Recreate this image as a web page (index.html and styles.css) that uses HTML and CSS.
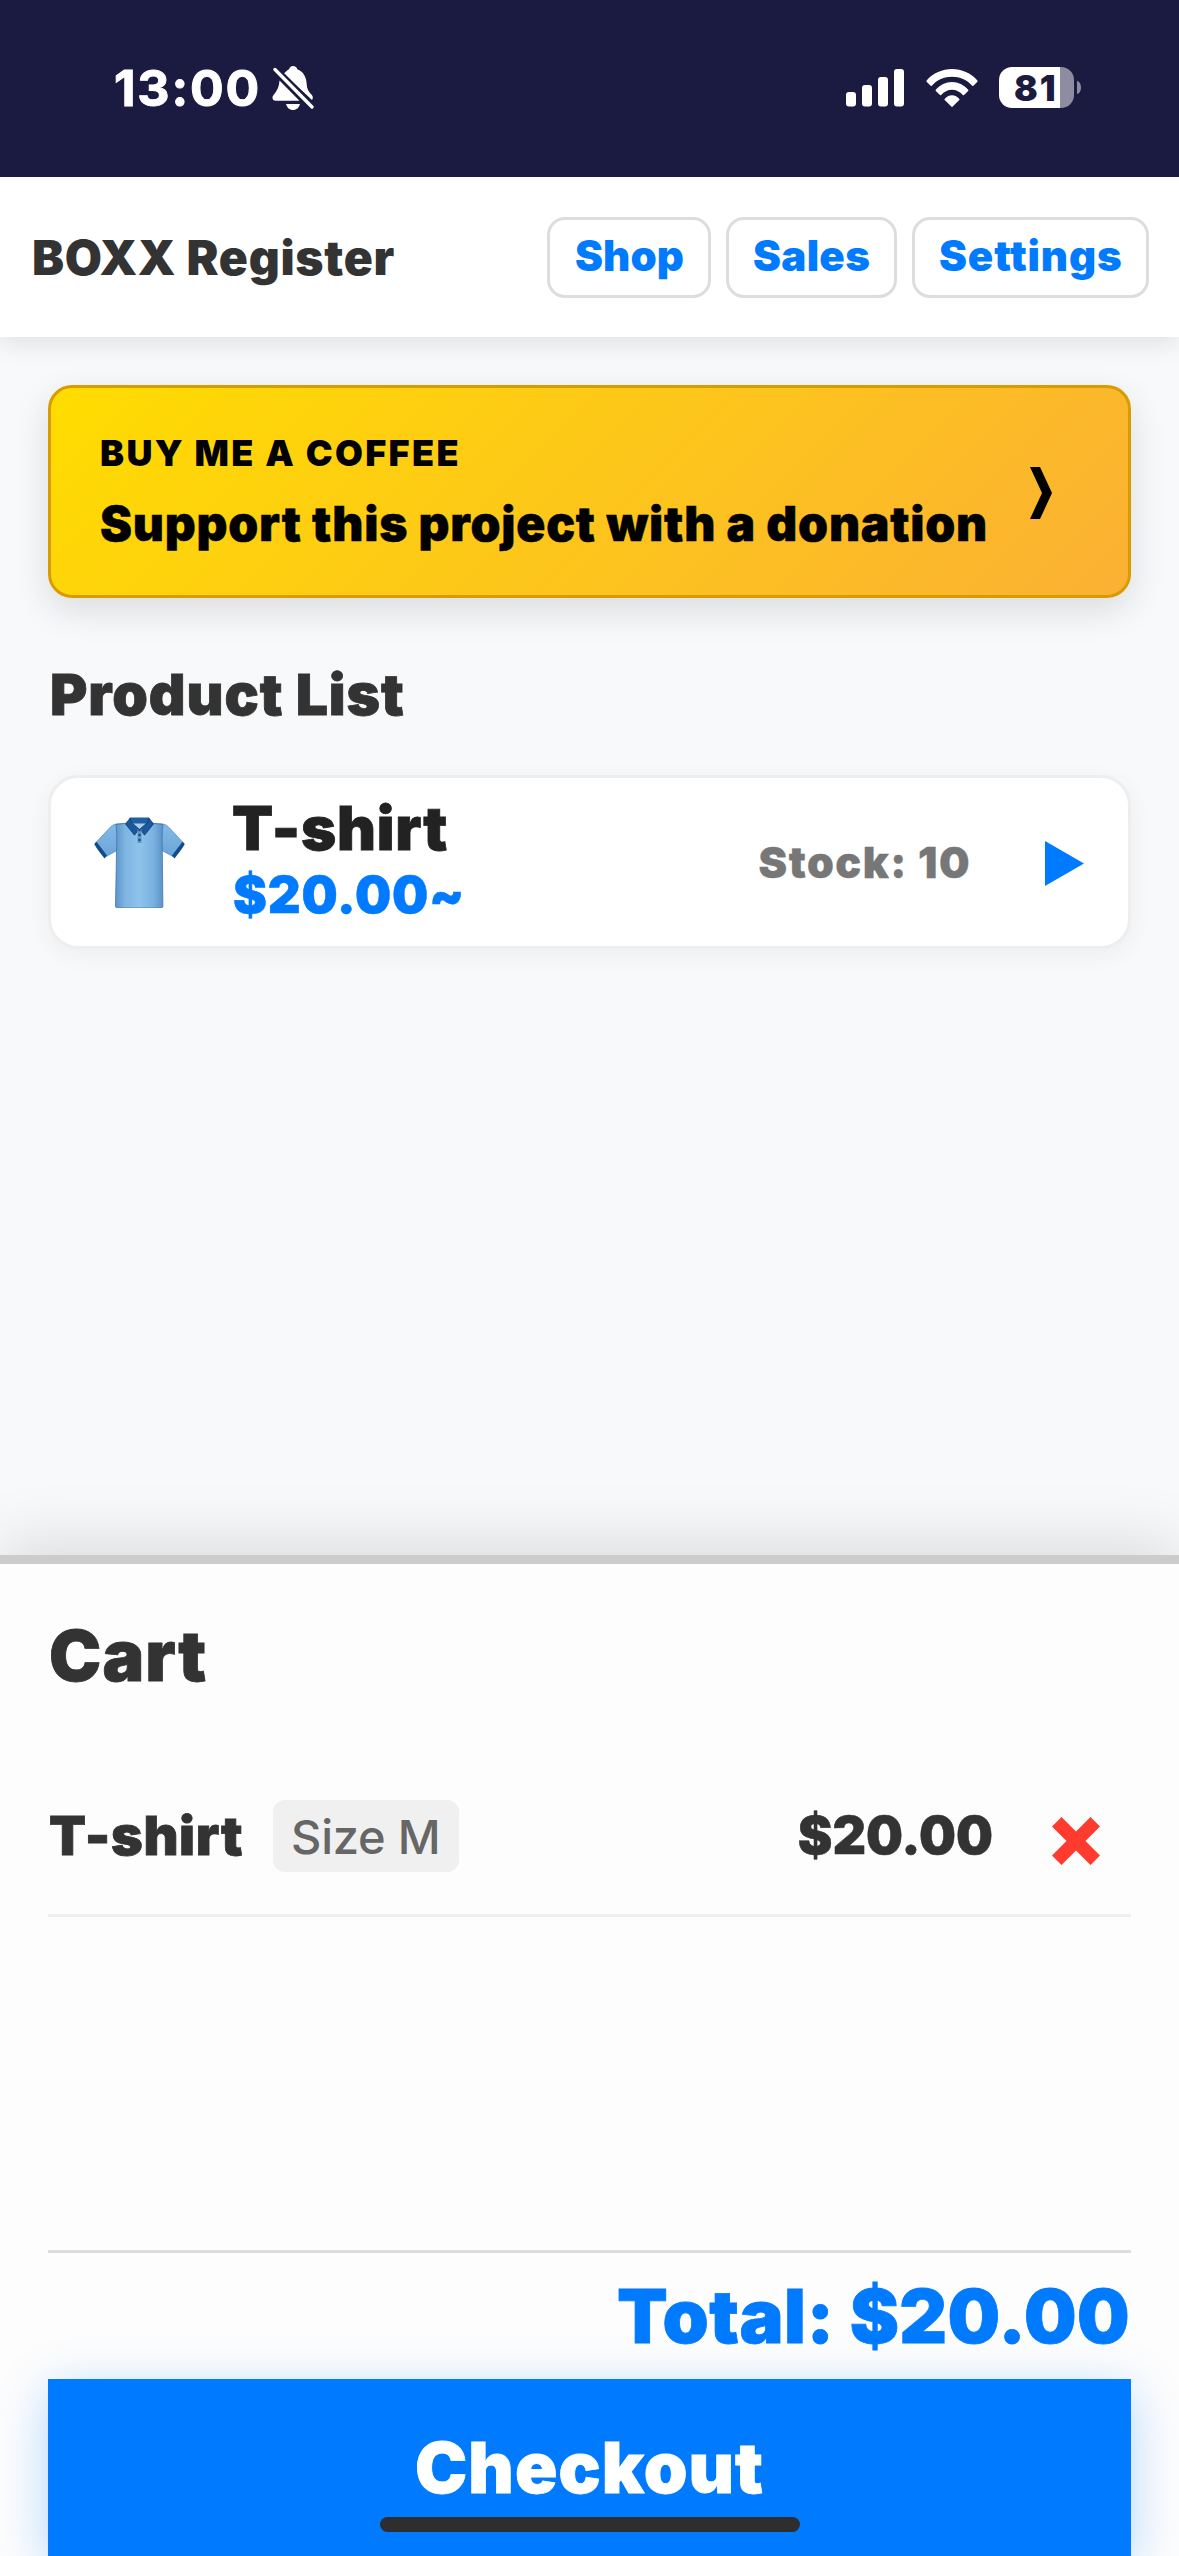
FILE: index.html
```html
<!DOCTYPE html>
<html lang="en">
<head>
<meta charset="utf-8">
<title>BOXX Register</title>
<link rel="stylesheet" href="styles.css">
</head>
<body>
<div class="app">
  <div class="status">
    <div class="status-left">
      <span class="time">13:00</span>
      <svg class="bell" viewBox="0 0 42 44" width="42" height="44">
        <path fill="#fff" d="M13 6.500C15 4.500 16 4 17 3.300 18 1 19 0 21 0s4 1.200 4.500 3.500C31 5.500 34 10 34.600 17c.4 6 1.800 8.500 4.400 11 2 2 2.500 4 1 6L11.500 7.500z"/>
        <path fill="#fff" d="M7.500 14.500 27.500 34.800H4C.5 34.800-.5 31.500 1.500 29 5 25 7 21 7.500 14.500z"/>
        <path fill="#fff" d="M14 38h14c-1 3.800-3.500 6-7 6s-6-2.200-7-6z"/>
        <path stroke="#1b1a40" stroke-width="8" d="M3 3.500 40 41"/>
        <path stroke="#fff" stroke-width="3.300" stroke-linecap="round" d="M3 3.500 40 41"/>
      </svg>
    </div>
    <div class="status-right">
      <svg class="signal" viewBox="0 0 58 38" width="58" height="38" fill="#fff">
        <rect x="0" y="23" width="10" height="14.500" rx="3"/><rect x="16" y="16" width="10" height="21.500" rx="3"/>
        <rect x="32" y="8" width="10" height="29.500" rx="3"/><rect x="48" y="0" width="10" height="37.500" rx="3"/>
      </svg>
      <svg class="wifi" viewBox="0 0 52 38" width="52" height="38" fill="#fff">
        <path d="M0.600 11.500C7 4 16.500 0 26 0s19 4 25.400 11.500c.3.400.3.900 0 1.200l-4 4c-.4.400-.9.400-1.200 0C41 11 33.800 7.800 26 7.800S11 11 5.800 16.700c-.3.400-.8.400-1.200 0l-4-4c-.3-.3-.3-.8 0-1.200z"/>
        <path d="M9.800 20.700C14 16 19.800 13 26 13s12 3 16.200 7.700c.3.400.3.900 0 1.200l-4.200 4.100c-.4.400-.9.300-1.200 0C34 22.700 30.200 20.700 26 20.700s-8 2-10.800 5.300c-.3.300-.8.400-1.200 0l-4.200-4.100c-.3-.3-.3-.8 0-1.200z"/>
        <path d="M18.600 30c2-2.400 4.500-3.800 7.400-3.800s5.400 1.400 7.400 3.800c.3.400.2.800-.1 1.100L26.700 37.600c-.4.400-1 .4-1.400 0l-6.600-6.500c-.3-.3-.4-.7-.1-1.100z"/>
      </svg>
      <div class="battery"><span class="level">81</span></div>
      <span class="nub"></span>
    </div>
  </div>

  <header class="header">
    <h1 class="brand">BOXX Register</h1>
    <nav class="nav">
      <a class="nav-btn shop">Shop</a>
      <a class="nav-btn sales">Sales</a>
      <a class="nav-btn settings">Settings</a>
    </nav>
  </header>

  <main class="main">
    <a class="banner">
      <div>
        <div class="banner-kicker">BUY ME A COFFEE</div>
        <div class="banner-title">Support this project with a donation</div>
      </div>
      <svg class="chevron" viewBox="0 0 22 52" width="22" height="52"><path d="M0 0h10l12 26-12 26H0l12-26z"/></svg>
    </a>

    <h2 class="heading">Product List</h2>
    <div class="product">
      <svg class="shirt" viewBox="0 0 91 91" width="91" height="91">
        <defs>
          <linearGradient id="body" x1="0" x2="1"><stop offset="0" stop-color="#5d95cb"/><stop offset=".2" stop-color="#7db4e2"/><stop offset=".5" stop-color="#8fc3eb"/><stop offset=".8" stop-color="#79b1e0"/><stop offset="1" stop-color="#5b92c8"/></linearGradient>
          <linearGradient id="sleeve" x1="0" y1="0" x2="0" y2="1"><stop offset="0" stop-color="#83bae8"/><stop offset="1" stop-color="#6ba5d8"/></linearGradient>
        </defs>
        <path fill="url(#sleeve)" stroke="#4f83b5" stroke-width=".7" d="M32 6.500c-6 .3-11-.5-15 3L1.500 26 12 39.500 23 33.500zM59 6.500c6 .3 11-.5 15 3L89.500 26 79 39.500 68 33.500z"/>
        <path fill="url(#body)" stroke="#4176a9" stroke-width=".8" d="M33 6c-4 .8-7 1-11 1.500C23 16 22.800 24 22.500 34L21.500 89.500c0 .7.500 1 1.200 1 15 .6 30 .6 45 0 .8 0 1.300-.4 1.200-1L68.300 34C68 24 67.800 16 69 7.500 65 7 62 6.800 58 6z"/>
        <path fill="#104b8c" d="M.2 27 2.500 24.800 13 38.500 10.500 41.500C6.500 36.500 3 32 .2 27zM90.800 27l-2.300-2.200L78 38.500l2.500 3c4-5 7.500-9.500 10.300-14.500z"/>
        <path fill="#a9cbe7" d="M38 5h15l-7 9z"/>
        <path fill="#1c61a3" d="M36 .5h19l2 6H34z"/>
        <path fill="#1a579b" stroke="#113e7c" stroke-width=".8" d="M36 1.200 31.500 7 40.500 18.200 45 12 37.500 5.500zM55 1.200 59.500 7 50.500 18.200 46 12 53.500 5.500z"/>
        <path stroke="#6196c8" stroke-width="4" d="M45.500 12v14"/>
        <g fill="#174c85"><circle cx="45.500" cy="13" r="1.300"/><circle cx="45.500" cy="18" r="1.300"/><circle cx="45.500" cy="23" r="1.300"/></g>
      </svg>
      <div class="product-info">
        <div class="product-name">T-shirt</div>
        <div class="product-price">$20.00~</div>
      </div>
      <div class="stock">Stock: 10</div>
      <svg class="play" viewBox="0 0 39 45" width="39" height="45"><path fill="#007aff" d="M0 0 39 22.500 0 45z"/></svg>
    </div>
  </main>

  <section class="cart">
    <h2 class="cart-heading">Cart</h2>
    <div class="cart-list">
      <div class="cart-row">
        <span class="cart-name">T-shirt</span>
        <span class="cart-size">Size M</span>
        <span class="cart-price">$20.00</span>
        <svg class="remove" viewBox="0 0 48 48" width="48" height="48"><path fill="#ff3b30" d="M9.500 0 24 14.500 38.500 0 48 9.500 33.500 24 48 38.500 38.500 48 24 33.500 9.500 48 0 38.500 14.500 24 0 9.500z"/></svg>
      </div>
    </div>
    <div class="total">Total: $20.00</div>
    <button class="checkout">Checkout</button>
  </section>
  <div class="home-indicator"></div>
</div>
</body>
</html>
```
FILE: styles.css
```css
* { box-sizing: border-box; margin: 0; padding: 0; }
body { font-family: Inter, "Liberation Sans", sans-serif; background: #f8f9fb; color: #333; }
svg { display: block; flex: none; }
.app { position: relative; width: 1179px; height: 2556px; display: flex; flex-direction: column; overflow: hidden; white-space: nowrap; }

/* status bar */
.status { height: 177px; flex: none; position: relative; z-index: 1; background: #1b1a40; color: #fff; display: flex; justify-content: space-between; align-items: flex-start; padding: 66px 98px 0 114px; }
.status-left, .status-right { display: flex; align-items: flex-start; }
.time { font-size: 50px; font-weight: 700; line-height: 45px; letter-spacing: 1.800px; width: 158px; -webkit-text-stroke: 1px; }
.signal { margin-top: 3px; margin-right: 22px; }
.wifi { margin-top: 3px; margin-right: 21px; }
.battery { width: 75px; height: 41px; margin-top: 1px; border-radius: 13px; background: linear-gradient(90deg, #fff 61px, #8d8ca0 61px); }
.level { display: block; padding-left: 15px; color: #1b1a40; font-size: 35px; line-height: 42px; font-weight: 900; letter-spacing: 2px; }
.nub { width: 4px; height: 13px; margin: 15px 0 0 3px; border-radius: 0 4px 4px 0 / 0 6.500px 6.500px 0; background: #8d8ca0; }

/* header */
.header { height: 160px; flex: none; position: relative; background: #fff; box-shadow: 0 6px 24px rgba(0, 0, 0, .1); display: flex; align-items: center; justify-content: space-between; padding: 0 30px; }
.brand { font-size: 48px; line-height: 60px; font-weight: 900; letter-spacing: .700px; padding-top: 2px; padding-left: 2px; }
.nav { display: flex; gap: 15px; padding-top: 1px; }
.nav-btn { height: 81px; border: 3px solid #ddd; border-radius: 18px; color: #007aff; font-size: 42px; font-weight: 900; line-height: 72px; padding-left: 25px; }
.shop { width: 164px; letter-spacing: .1px; }
.sales { width: 171px; letter-spacing: .3px; padding-left: 24px; }
.settings { width: 237px; letter-spacing: .850px; padding-left: 24px; }

/* product area */
.main { flex: 1; padding: 48px 48px 0; }
.banner { height: 213px; border: 3px solid #d89b00; border-radius: 24px; background: linear-gradient(135deg, #ffdd00, #fbb034); background-origin: border-box; box-shadow: 0 12px 36px rgba(0, 0, 0, .12); color: #000; display: flex; align-items: center; justify-content: space-between; padding: 0 76px 0 49px; }
.banner-kicker { font-size: 36px; font-weight: 900; line-height: 56px; letter-spacing: 2.350px; margin-top: 2px; }
.banner-title { font-size: 48px; font-weight: 900; line-height: 72px; letter-spacing: .790px; padding-top: 7px; -webkit-text-stroke: .5px; }
.chevron { margin-top: 2px; }
.heading { font-size: 57px; font-weight: 900; line-height: 70px; letter-spacing: .920px; margin: 62px 0 45px 2px; -webkit-text-stroke: .8px; }
.product { height: 174px; border: 3px solid #eee; border-radius: 30px; background: #fff; box-shadow: 0 6px 24px rgba(0, 0, 0, .05); display: flex; align-items: center; padding: 0 44px 0 43px; }
.product-info { margin-left: 47px; padding-bottom: 8px; flex: 1; }
.product-name { font-size: 60px; font-weight: 900; line-height: 72px; letter-spacing: .700px; color: #222; -webkit-text-stroke: .8px; }
.product-price { font-size: 51px; font-weight: 900; line-height: 61px; letter-spacing: .770px; color: #007aff; padding-left: 1px; -webkit-text-stroke: .5px; }
.stock { font-size: 43px; font-weight: 900; line-height: 50px; letter-spacing: 1.500px; color: #777; margin-right: 74px; -webkit-text-stroke: .3px; }
.play { margin-top: 3px; }

/* cart */
.cart { height: 1001px; flex: none; position: relative; border-top: 9px solid #ccc; background: #fdfdfd; box-shadow: 0 -12px 60px rgba(0, 0, 0, .12); padding: 50px 48px 0; display: flex; flex-direction: column; }
.cart-heading { font-size: 70px; font-weight: 900; line-height: 84px; letter-spacing: 1.100px; padding-left: 1px; -webkit-text-stroke: .8px; }
.cart-list { flex: 1; padding-top: 60px; }
.cart-row { height: 159px; border-bottom: 3px solid #eee; display: flex; align-items: center; padding-right: 31px; }
.cart-name { font-size: 54px; font-weight: 900; line-height: 72px; letter-spacing: .600px; width: 225px; padding-left: 1px; -webkit-text-stroke: .8px; }
.cart-size { width: 186px; height: 72px; border-radius: 12px; background: #f0f0f0; color: #666; font-size: 47px; font-weight: 500; line-height: 74px; letter-spacing: -.2px; padding-left: 18px; }
.cart-price { margin-left: auto; margin-right: 59px; font-size: 52px; font-weight: 900; line-height: 72px; -webkit-text-stroke: .5px; }
.remove { margin-top: 9px; }
.total { height: 129px; border-top: 3px solid #ddd; color: #007aff; font-size: 74px; font-weight: 900; line-height: 126px; letter-spacing: .430px; text-align: right; padding-right: 1px; -webkit-text-stroke: .8px; }
.checkout { height: 177px; flex: none; border: 0; background: #007aff; color: #fff; font: 900 70px/177px Inter, sans-serif; letter-spacing: 1.070px; -webkit-text-stroke: .8px; box-shadow: 0 12px 48px rgba(0, 122, 255, .3); }
.home-indicator { position: absolute; left: 380px; bottom: 24px; width: 420px; height: 15px; border-radius: 8px; background: #2e2e2e; }
```
